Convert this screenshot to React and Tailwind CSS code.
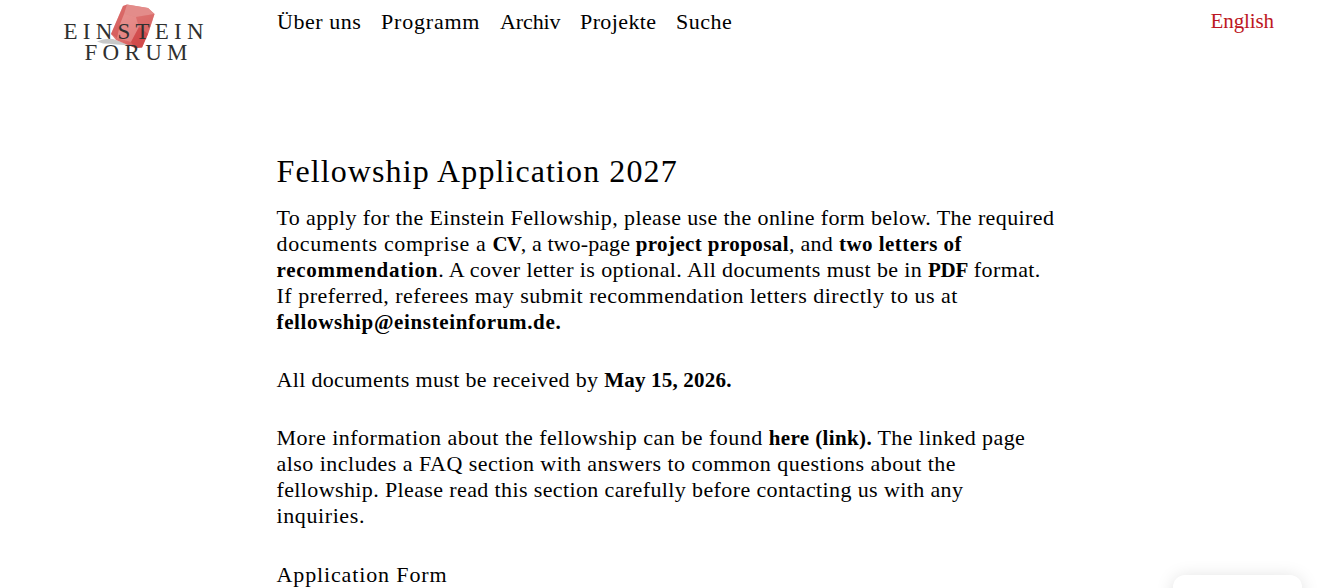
import React from 'react';

const navItems = [
  { label: 'Über uns', className: 'w-[104px] tracking-[0.55px]' },
  { label: 'Programm', className: 'w-[119px] tracking-[0.8px]' },
  { label: 'Archiv', className: 'w-[80px] tracking-[-0.1px]' },
  { label: 'Projekte', className: 'w-[96px] tracking-[0.4px]' },
  { label: 'Suche', className: 'tracking-[0.5px]' },
];

const Logo = () => (
  <svg className="h-[64px] w-[150px]" viewBox="0 0 150 64" aria-label="Einstein Forum">
    <defs>
      <linearGradient id="stone" x1="0" y1="0" x2="0.6" y2="1">
        <stop offset="0" stopColor="#e99a98" />
        <stop offset="0.5" stopColor="#e07d7b" />
        <stop offset="1" stopColor="#d65655" />
      </linearGradient>
    </defs>
    <path d="M37 41.5 Q44 38 53 39 L72 46 Q55 44 43 43.500 Z" fill="#c8c8c8" />
    <path d="M63 6 L67 4.500 L88 8 L94.500 14 L88 34 L82 47.500 L75 48 L56 40 L51 34 Z" fill="url(#stone)" />
    <path d="M67 4.500 L88 8 L94.500 14 L76 17 L64 14 Z" fill="#e38c8a" />
    <path d="M64 14 L76 17 L79 27 L71 42 L57 38 L60 24 Z" fill="#e99694" fillOpacity="0.55" />
    <path d="M76 17 L94.500 14 L88 34 L79 27 Z" fill="#d96664" fillOpacity="0.6" />
    <path d="M79 27 L88 34 L82 47.500 L75 48 L71 42 Z" fill="#cf4345" fillOpacity="0.7" />
    <path d="M63 6 L67 4.500 L64 14 L60 24 L57 38 L51 34 Z" fill="#cf4a4b" fillOpacity="0.55" />
    <g fill="#303030" fontFamily="Liberation Serif, serif" fontSize="23">
      <text x="3.5" y="38.5" textLength="140" lengthAdjust="spacing">EINSTEIN</text>
      <text x="24.5" y="59.5" textLength="103" lengthAdjust="spacing">FORUM</text>
    </g>
  </svg>
);

const Line = ({ className, children }) => (
  <span className={`block h-[26px] whitespace-nowrap ${className}`}>{children}</span>
);

const Bold = ({ className, children }) => (
  <b className={`text-[21px] leading-none ${className}`}>{children}</b>
);

const App = () => {
  return (
    <div className="relative h-[588px] overflow-hidden bg-white font-['Liberation_Serif',serif] text-[22px] leading-[26px] text-black">
      <header className="flex h-[64px] items-start pl-[60px]">
        <Logo />
        <nav className="ml-[67px] flex pt-[9px]">
          {navItems.map((item) => (
            <a key={item.label} href="#" className={`block whitespace-nowrap ${item.className}`}>
              {item.label}
            </a>
          ))}
        </nav>
        <a href="#" className="mr-[63px] ml-auto pt-[8px] text-[21px] tracking-[-0.1px] text-[#bd1622]">
          English
        </a>
      </header>

      <main className="ml-[276.5px] w-[800px] pt-[87px]">
        <h1 className="h-[54px] text-[32px] leading-[40px] tracking-[1.1px] whitespace-nowrap">
          Fellowship Application 2027
        </h1>
        <p className="mb-8">
          <Line className="tracking-[0.39px]">
            To apply for the Einstein Fellowship, please use the online form below. The required
          </Line>
          <Line className="tracking-[0.1px]">
            <span className="tracking-[0.66px]">documents comprise a </span>
            <Bold className="tracking-[-1.1px]">CV</Bold>, a two-page{' '}
            <Bold className="tracking-[0.4px]">project proposal</Bold>
            <span className="tracking-[0.3px]">, and </span>
            <Bold className="tracking-[0.46px]">two letters of</Bold>
          </Line>
          <Line className="tracking-[0.385px]">
            <Bold className="tracking-[0.75px]">recommendation</Bold>. A cover letter is optional. All
            documents must be in <Bold className="tracking-[-0.33px]">PDF</Bold> format.
          </Line>
          <Line className="tracking-[0.5px]">
            If preferred, referees may submit recommendation letters directly to us at
          </Line>
          <Line className="tracking-[0.64px]">
            <Bold>fellowship@einsteinforum.de.</Bold>
          </Line>
        </p>
        <p className="mb-8">
          <Line className="tracking-[0.33px]">
            All documents must be received by <Bold className="tracking-[0.2px]">May 15, 2026.</Bold>
          </Line>
        </p>
        <p className="mb-8">
          <Line className="tracking-[0.5px]">
            More information about the fellowship can be found{' '}
            <Bold className="tracking-[0.37px]">here (link).</Bold>
            <span className="tracking-[0.4px]"> The linked page</span>
          </Line>
          <Line className="tracking-[0.47px]">
            also includes a FAQ section with answers to common questions about the
          </Line>
          <Line className="tracking-[0.38px]">
            fellowship. Please read this section carefully before contacting us with any
          </Line>
          <Line className="tracking-[0.6px]">inquiries.</Line>
        </p>
        <h2 className="pt-px tracking-[0.87px]">Application Form</h2>
      </main>

      {/* top edge of the floating widget */}
      <div className="absolute top-[575px] left-[1173px] h-[60px] w-[129px] rounded-[12px] bg-white shadow-[0_2px_18px_rgba(0,0,0,0.13)]" />
    </div>
  );
};

export default App;
